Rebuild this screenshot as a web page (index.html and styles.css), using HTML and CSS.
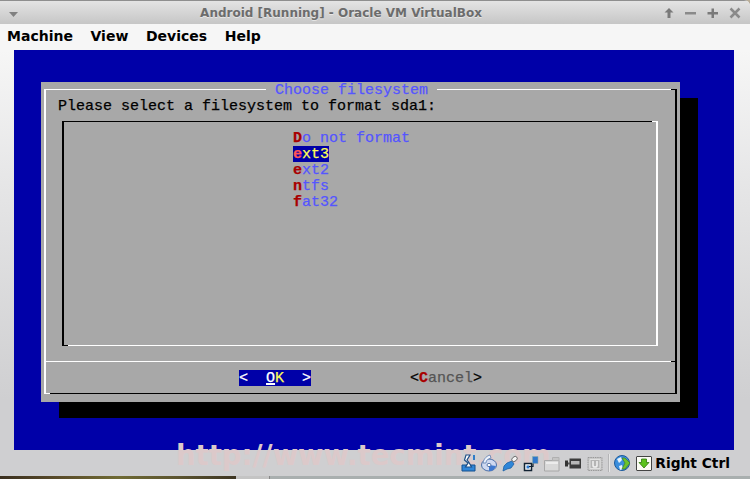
FILE: index.html
```html
<!DOCTYPE html>
<html lang="en">
<head>
<meta charset="utf-8">
<title>Android [Running] - Oracle VM VirtualBox</title>
<link rel="stylesheet" href="styles.css">
</head>
<body>
<div class="desktop">
  <div class="window">
    <header class="titlebar">
      <svg class="win-menu" width="10" height="6" viewBox="0 0 10 6"><path d="M0 0h9L4.500 5z" fill="#808080"/></svg>
      <div class="win-title">Android [Running] - Oracle VM VirtualBox</div>
      <div class="win-buttons">
        <svg width="12" height="12" viewBox="0 0 12 12"><path d="M6 1L1.500 5.500h3V11h3V5.500h3z" fill="#7a7a7a"/></svg>
        <svg width="12" height="12" viewBox="0 0 12 12"><path d="M0 5h11v2.500H0z" fill="#8a8a8a"/></svg>
        <svg width="12" height="12" viewBox="0 0 12 12"><path d="M4.500 1.500h2.500V5h4v2.500H7V11H4.500V7.500H.5V5h4z" fill="#7a7a7a"/></svg>
        <svg width="12" height="12" viewBox="0 0 12 12"><path d="M1.500 1.500l9 9M10.500 1.500l-9 9" stroke="#8a8a8a" stroke-width="2.500" fill="none"/></svg>
      </div>
    </header>
    <nav class="menubar">
      <span class="menu-item">Machine</span>
      <span class="menu-item">View</span>
      <span class="menu-item">Devices</span>
      <span class="menu-item">Help</span>
    </nav>
    <main class="viewport">
      <div class="screen">
        <section class="dialog">
          <div class="frame">
            <div class="dialog-title">Choose filesystem</div>
            <p class="prompt">Please select a filesystem to format sda1:</p>
            <div class="listbox">
              <ul class="options">
                <li class="option"><b class="hot">D</b>o not format</li>
                <li class="option selected"><b class="hot">e</b>xt3</li>
                <li class="option"><b class="hot">e</b>xt2</li>
                <li class="option"><b class="hot">n</b>tfs</li>
                <li class="option"><b class="hot">f</b>at32</li>
              </ul>
            </div>
            <div class="separator"></div>
            <div class="buttons">
              <span class="button active">&lt;  <u class="ok-o">O</u><span class="ok-k">K</span>  &gt;</span>
              <span class="button"><span class="bracket">&lt;</span><b class="hot">C</b>ancel<span class="bracket">&gt;</span></span>
            </div>
          </div>
        </section>
      </div>
    </main>
    <footer class="statusbar">
      <div class="watermark">http://www.tecmint.com</div>
      <div class="status-icons">
        <svg class="ic" width="15" height="18" viewBox="0 0 15 18">
          <path d="M1 11h13v6H1z" fill="#2f86d8" stroke="#14508f"/>
          <path d="M9 1H5L3.500 6 7 9 4.500 13h6L8 8.500 6 6z" fill="#fff" stroke="#1d4f86" stroke-width="1.200"/>
          <path d="M13 1v5" stroke="#2f7cc8" stroke-width="2"/>
        </svg>
        <svg class="ic" width="16" height="18" viewBox="0 0 16 18">
          <ellipse cx="8" cy="11" rx="7.500" ry="6" fill="#cfd8f0" stroke="#4a6fa8"/>
          <path d="M2 9C3 4 6 2 9 1l1 3C7 5 5 6 5 9z" fill="#eef3fb" stroke="#5a7cb0" stroke-width=".8"/>
          <path d="M8 11l7 1c-1 3-4 5-7 5z" fill="#3f78d0"/>
          <ellipse cx="8" cy="11" rx="2" ry="1.600" fill="#fff" stroke="#3a5c96" stroke-width=".8"/>
        </svg>
        <svg class="ic" width="16" height="18" viewBox="0 0 16 18">
          <path d="M1 17l1-5 3-3 5-2 2 3-3 4-4 1z" fill="#2f86d8" stroke="#1c5fa4" stroke-width=".8"/>
          <ellipse cx="12.500" cy="5" rx="3" ry="2.200" transform="rotate(-40 12.500 5)" fill="#f6f6f6" stroke="#555" stroke-width=".8"/>
        </svg>
        <svg class="ic" width="16" height="18" viewBox="0 0 16 18">
          <path d="M1.500 9.500h7v7h-7z" fill="#fff" stroke="#123" stroke-width="1.500"/>
          <path d="M3.500 11.500h3v3h-3z" fill="#2f78cc"/>
          <path d="M9.500 2.500h5.500v7H9.500z" fill="#2f78cc" stroke="#8aa" stroke-width=".6"/>
          <path d="M10 9.500v3H6" stroke="#123" stroke-width="1.200" fill="none"/>
        </svg>
        <svg class="ic" width="16" height="18" viewBox="0 0 16 18">
          <path d="M.5 6.500h14.500v10.500H.5z" fill="#d8d8d8" stroke="#a8a8a8"/>
          <path d="M8.500 3.500h6.500v3H8.500z" fill="#c4c4c4" stroke="#b0b0b0"/>
          <path d="M2 8h12v2H2z" fill="#ececec"/>
        </svg>
        <svg class="ic camera" width="16" height="18" viewBox="0 0 16 18">
          <path d="M4.500 4.500h11a.5.5 0 0 1 .5.500v9a.5.5 0 0 1-.5.500h-11z" fill="#3c3c3c"/>
          <path d="M6 7h8.500v3.500H6z" fill="#b8b8b8"/>
          <path d="M0 6.500h3v6H0z" fill="#333"/>
          <path d="M3 8.500h2v2H3z" fill="#555"/>
        </svg>
        <svg class="ic" width="16" height="18" viewBox="0 0 16 18">
          <path d="M1 3.500h14v13H1z" fill="#c8c8c8" stroke="#999" stroke-dasharray="1.500 .8"/>
          <path d="M3 5.500h10v9H3z" fill="#b4b4b4" stroke="#e0e0e0"/>
          <path d="M6 7v4.500c0 1 .8 1.500 2 1.500s2-.5 2-1.500V7" fill="none" stroke="#eee" stroke-width="1.600"/>
        </svg>
        <span class="status-sep"></span>
        <svg class="ic" width="17" height="18" viewBox="0 0 17 18">
          <circle cx="8" cy="9" r="7.500" fill="#3b8edc" stroke="#1c5a9c"/>
          <path d="M3 5l4-2 1 3-3 3zM5 12l3-1 1 4-3 1z" fill="#e8f2fb"/>
          <path d="M8 4l3 0 5 5-5 6h-3l3-6z" fill="#6cc22e" stroke="#3c7a12" stroke-width=".6"/>
        </svg>
        <svg class="ic" width="16" height="18" viewBox="0 0 16 18">
          <path d="M1 2.500h14c.500 0 .5.500.5.500v13c0 .5-.5.5-.5.5H1c-.5 0-.5-.5-.5-.5V3s0-.5.500-.5z" fill="#fbfbf4" stroke="#444"/>
          <path d="M5.500 5h5v3.500h2.500L8 14 3 8.500h2.500z" fill="#5cc21c" stroke="#2f7a0c" stroke-width=".8"/>
        </svg>
        <span class="host-key">Right Ctrl</span>
      </div>
    </footer>
  </div>
  <div class="desktop-strip">
    <span class="strip-photo"></span>
    <span class="strip-light"></span>
    <span class="strip-rest"></span>
  </div>
</div>
</body>
</html>
```

FILE: styles.css
```css
* { box-sizing: border-box; }

html, body {
  margin: 0;
  padding: 0;
}

body {
  width: 750px;
  height: 479px;
  overflow: hidden;
  background: #b9ad98;
}

.desktop {
  display: flex;
  flex-direction: column;
  width: 750px;
  height: 479px;
}

.window {
  display: flex;
  flex-direction: column;
  height: 476px;
  position: relative;
  background: linear-gradient(#f6f6f6 0, #f6f6f6 50px, #e4e4e5 200px, #cfcfd1 400px);
  border-top-right-radius: 6px;
  overflow: hidden;
}

.titlebar {
  display: flex;
  align-items: center;
  height: 24px;
  padding: 1px 9px 0 9px;
  border-top: 1px solid #8f8f8f;
  background: linear-gradient(#e4e4e4, #c6c6c6);
}

.win-menu {
  flex: none;
  margin-top: 3px;
}

.win-title {
  flex: 1;
  text-align: center;
  font: bold 12px "DejaVu Sans", sans-serif;
  color: #6c6c6c;
  text-shadow: 0 1px 0 rgba(255, 255, 255, .5);
}

.win-buttons {
  display: flex;
  gap: 10px;
}

.menubar {
  display: flex;
  align-items: center;
  height: 26px;
  padding: 0 0 2px 7px;
  gap: 17.600px;
  font: bold 14px "DejaVu Sans", sans-serif;
  color: #000;
}

.viewport {
  padding-left: 14px;
}

.screen {
  width: 720px;
  height: 400px;
  padding: 32px 0 0 27px;
  background: #0000a8;
  font: 15px/18px "Liberation Mono", monospace;
  -webkit-text-stroke: .25px currentColor;
}

.dialog {
  width: 639px;
  height: 320px;
  padding: 7px 3px 8px;
  background: #a8a8a8;
  box-shadow: 18px 16px 0 #000;
}

.frame {
  position: relative;
  height: 305px;
  border-style: solid;
  border-width: 1px 2px;
  border-color: #fff #000 #000 #fff;
}

.frame::before {
  content: "";
  position: absolute;
  top: -1px;
  right: -2px;
  width: 6px;
  height: 1px;
  background: #000;
}

.frame::after {
  content: "";
  position: absolute;
  bottom: -1px;
  left: -2px;
  width: 6px;
  height: 1px;
  background: #fff;
}

.dialog-title {
  position: absolute;
  top: -8px;
  left: 220px;
  height: 16px;
  padding: 0 9px;
  background: #a8a8a8;
  color: #5555ff;
  white-space: pre;
}

.prompt {
  height: 16px;
  margin: 8px 0 0 12px;
  color: #000;
  white-space: pre;
}

.listbox {
  position: relative;
  width: 596px;
  height: 225px;
  margin: 7px 0 0 16px;
  padding: 8px 0 0 229px;
  border-style: solid;
  border-width: 1px 2px;
  border-color: #000 #fff #fff #000;
}

.listbox::before {
  content: "";
  position: absolute;
  top: -1px;
  right: -2px;
  width: 6px;
  height: 1px;
  background: #fff;
}

.listbox::after {
  content: "";
  position: absolute;
  bottom: -1px;
  left: -2px;
  width: 6px;
  height: 1px;
  background: #000;
}

.options {
  margin: 0;
  padding: 0;
  list-style: none;
}

.option {
  width: 36px;
  height: 16px;
  color: #5555ff;
  white-space: pre;
}

.option.selected {
  background: #0000a8;
  color: #ffff55;
}

.hot {
  color: #a80000;
}

.selected .hot {
  color: #ff5555;
}

.separator {
  position: relative;
  height: 1px;
  margin-top: 15px;
  background: #fff;
}

.separator::after {
  content: "";
  position: absolute;
  top: 0;
  right: 0;
  width: 4px;
  height: 1px;
  background: #000;
}

.buttons {
  display: flex;
  gap: 99px;
  margin: 8px 0 0 193px;
}

.button {
  width: 72px;
  height: 16px;
  color: #555;
  white-space: pre;
}

.button.active {
  background: #0000a8;
  color: #fff;
}

.bracket {
  color: #000;
}

.ok-o {
  color: #fff;
  text-underline-offset: 1px;
  text-decoration-thickness: 2px;
}

.ok-k {
  color: #ffff55;
}

.statusbar {
  position: relative;
  flex: 1;
  min-height: 0;
}

.watermark {
  position: absolute;
  left: 176px;
  top: -11px;
  font: bold 27.500px/32px "DejaVu Sans", sans-serif;
  color: #dcc9ca;
  white-space: nowrap;
}

.status-icons {
  position: relative;
  display: flex;
  justify-content: flex-end;
  align-items: center;
  gap: 5px;
  height: 26px;
  padding-right: 20px;
}

.ic {
  flex: none;
}

.camera {
  margin-right: 1px;
}

.status-sep {
  width: 1px;
  height: 18px;
  background: #b4b4b6;
  box-shadow: 1px 0 0 #e6e6e6;
}

.host-key {
  margin-left: -2px;
  font: bold 13.800px "DejaVu Sans", sans-serif;
  color: #000;
}

.desktop-strip {
  display: flex;
  height: 3px;
}

.strip-photo {
  width: 236px;
  background: linear-gradient(90deg, #3a2f1f, #5a4c2a 25%, #6f6a34 50%, #5c5530 75%, #3d3523);
}

.strip-light {
  width: 34px;
  background: #c4c4c4;
  border-right: 1px solid #888;
}

.strip-rest {
  flex: 1;
  background: #a9afaf;
}
```
